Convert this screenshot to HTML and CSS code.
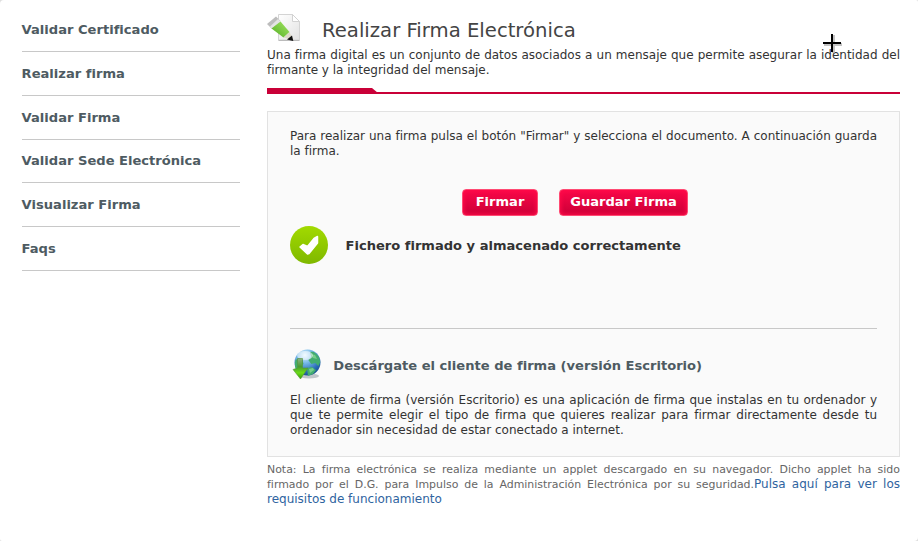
FILE: index.html
```html
<!DOCTYPE html>
<html lang="es">
<head>
<meta charset="utf-8">
<title>Realizar Firma Electrónica</title>
<link rel="stylesheet" href="styles.css">
</head>
<body>
<div class="page">
  <nav class="menu">
    <a>Validar Certificado</a>
    <a>Realizar firma</a>
    <a>Validar Firma</a>
    <a>Validar Sede Electrónica</a>
    <a>Visualizar Firma</a>
    <a>Faqs</a>
  </nav>
  <main class="content">
    <header class="heading">
      <svg class="doc-icon" width="34" height="30" viewBox="0 0 34 30">
        <defs>
          <linearGradient id="paper" x1="0" y1="0" x2="1" y2="1"><stop offset="0" stop-color="#fff"/><stop offset="1" stop-color="#e2e2e2"/></linearGradient>
          <linearGradient id="pencil" x1="0" y1="1" x2="1" y2="0"><stop offset="0" stop-color="#52ad22"/><stop offset="1" stop-color="#a5e665"/></linearGradient>
        </defs>
        <path d="M11.500 1.500h14l7 7v18.500h-21z" fill="url(#paper)" stroke="#d4d4d4"/>
        <path d="M25.500 1.500v7h7z" fill="#fff" stroke="#d2d2d2"/>
        <path d="M11.500 27.500h21" stroke="#bbb"/>
        <path d="M0 11L9 3.500l4.500 4.500-8.500 8z" fill="#bdbdbd"/>
        <path d="M3 13.500L11 6l2.500 2.500-8.500 7.500z" fill="#e4e4e4"/>
        <path d="M4.500 15.500L13.500 8.500l9 10.500-6 5.500z" fill="url(#pencil)"/>
        <path d="M16.500 24.500l6-5.500 3.500 8z" fill="#ddd9c8"/>
        <path d="M20 26.500l5-4 1.300 5.500z" fill="#111"/>
      </svg>
      <h1>Realizar Firma Electrónica</h1>
    </header>
    <p class="intro">Una firma digital es un conjunto de datos asociados a un mensaje que permite asegurar la identidad del firmante y la integridad del mensaje.</p>
    <div class="rule"></div>
    <section class="panel">
      <p>Para realizar una firma pulsa el botón "Firmar" y selecciona el documento. A continuación guarda la firma.</p>
      <div class="buttons">
        <button class="sign">Firmar</button>
        <button class="save">Guardar Firma</button>
      </div>
      <div class="status">
        <svg width="38" height="38" viewBox="0 0 38 38">
          <defs><linearGradient id="ok" x1="0" y1="0" x2="0" y2="1"><stop offset="0" stop-color="#a2da00"/><stop offset="1" stop-color="#7fb800"/></linearGradient></defs>
          <circle cx="19" cy="19" r="19" fill="url(#ok)"/>
          <path d="M10 21l3-2.500 4.500 2 6.500-8 3.500-2v6.500l-8.500 10.500-1.500.5z" fill="#fff" stroke="#fff" stroke-width="1.500" stroke-linejoin="round"/>
        </svg>
        <strong>Fichero firmado y almacenado correctamente</strong>
      </div>
      <div class="download">
        <svg width="32" height="34" viewBox="0 0 32 34">
          <defs>
            <radialGradient id="sea" cx=".4" cy=".22" r=".85"><stop offset="0" stop-color="#e2f5ff"/><stop offset=".35" stop-color="#78b9e8"/><stop offset=".75" stop-color="#2869b5"/><stop offset="1" stop-color="#174c83"/></radialGradient>
            <linearGradient id="arrow" x1="0" y1="0" x2="0" y2="1"><stop offset="0" stop-color="#8cae86"/><stop offset=".4" stop-color="#489b32"/><stop offset=".7" stop-color="#6bdc17"/><stop offset="1" stop-color="#329d08"/></linearGradient>
          </defs>
          <ellipse cx="19" cy="28" rx="10" ry="2.500" fill="#c1c6ca"/>
          <circle cx="17.500" cy="14.500" r="13" fill="url(#sea)"/>
          <path d="M20 4c4-1 6 1 9 5l1.300 5-2 4-3-3-4 1-3-4 3-3zM5.500 12l4-2 3 2 1 4-4 3-1 5c-4-3-4-8-3-12zM17 20l5-1 4 3-3 4-5 2z" fill="#42ac70"/>
          <path d="M21 6l4 1 2 4-4-1zM19 21l4-1 1 2-4 3z" fill="#76cd8a"/>
          <ellipse cx="15" cy="7.500" rx="8" ry="4.500" fill="#fff" opacity=".5"/>
          <path d="M7.500 10.500h5v9.500h5.500l-7.500 11L3 21.500l4.500-1.500z" fill="url(#arrow)" stroke="#56953a" stroke-width=".6"/>
        </svg>
        <strong>Descárgate el cliente de firma (versión Escritorio)</strong>
      </div>
      <p>El cliente de firma (versión Escritorio) es una aplicación de firma que instalas en tu ordenador y que te permite elegir el tipo de firma que quieres realizar para firmar directamente desde tu ordenador sin necesidad de estar conectado a internet.</p>
    </section>
    <p class="note"><small>Nota: La firma electrónica se realiza mediante un applet descargado en su navegador. Dicho applet ha sido firmado por el D.G. para Impulso de la Administración Electrónica por su seguridad.</small><a>Pulsa aquí para ver los requisitos de funcionamiento</a></p>
  </main>
  <svg class="cursor" width="24" height="24" viewBox="0 0 24 24">
    <path d="M4 13.500h18M13.500 4v18" stroke="#aaa" stroke-width="3" opacity=".7"/>
    <path d="M3 12h18M12 3v18" stroke="#000" stroke-width="2"/>
  </svg>
</div>
</body>
</html>
```
FILE: styles.css
```css
* { box-sizing: border-box; }
body { margin: 0; background: #dedede; font: 12px/15px "DejaVu Sans", sans-serif; color: #333; }
.page { position: relative; display: flex; gap: 27px; height: 541px; padding: 8px 18px 0 22px; background: #fff; border-radius: 4px 2px; }
.menu { width: 218px; flex: none; padding-top: 0.3px; }
.menu a { display: block; height: 43.8px; padding-top: 13.7px; border-bottom: 1px solid #c8c8c8; color: #4e5b62; font-size: 13.08px; font-weight: bold; line-height: 16px; text-indent: -0.4px; }
.content { width: 633px; flex: none; }
p { margin: 0; text-align: justify; }
.heading { display: flex; height: 40px; padding-top: 5px; }
.doc-icon { flex: none; }
h1 { margin: 6px 0 0 21px; font-size: 19.65px; line-height: 24px; font-weight: normal; color: #444; }
.intro { height: 40px; }
.rule { height: 6px; background: linear-gradient(#c90038, #c90038) 0 4px / 100% 2px no-repeat; }
.rule::before { content: ""; display: block; width: 111px; height: 6px; background: #c90038; clip-path: polygon(0 0, 105px 0, 111px 5px, 111px 6px, 0 6px); }
.panel { height: 346px; margin-top: 17px; padding: 17px 22px 0; background: #fafafa; border: 1px solid #e2e2e2; }
.buttons { display: flex; gap: 21px; margin: 30px 0 0 172px; }
button { height: 27px; padding: 0 0 2px; border: 1px solid #ff4a73; border-radius: 4px; background: linear-gradient(#fa0748, #cb0037); box-shadow: inset 0 0 4px 1px #ff0b4a; color: #fff; font: bold 13.06px/20px "DejaVu Sans", sans-serif; }
.sign { width: 76px; }
.save { width: 129px; }
.status { display: flex; gap: 17.6px; height: 103px; margin-top: 10px; border-bottom: 1px solid #c8c8c8; font-size: 13.06px; }
.status strong { padding-top: 12px; }
.download { display: flex; gap: 11.3px; height: 64px; padding-top: 19px; color: #4e5b62; font-size: 13.08px; }
.download strong { padding-top: 10px; }
.note { margin-top: 5px; color: #2f64a0; }
.note small { color: #666; font-size: 10.95px; }
.cursor { position: absolute; left: 820px; top: 31px; }
```
